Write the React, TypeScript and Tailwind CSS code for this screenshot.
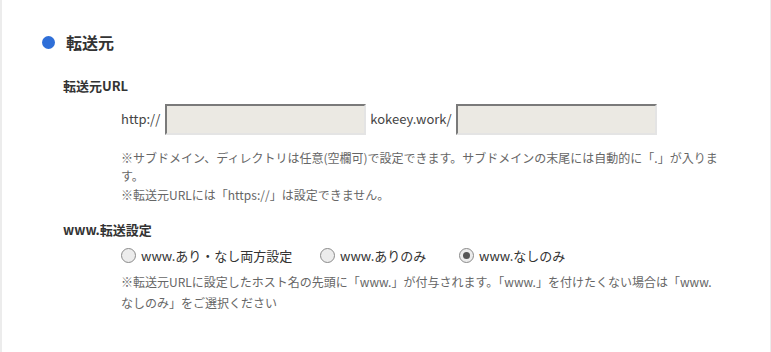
const font = { fontFamily: '"Noto Sans CJK JP", "Noto Sans", sans-serif' }

function TextBox() {
  return (
    <input
      type="text"
      className="w-[201px] h-[31px] bg-[#ebe9e3] border-2 border-t-[#7a7a7a] border-l-[#7a7a7a] border-b-[#e4e4e4] border-r-[#e4e4e4] outline-none"
    />
  )
}

function Radio({ label, checked }: { label: string; checked?: boolean }) {
  return (
    <label className="flex items-center gap-[5px] text-[13px] text-[#333]">
      <span className="w-[15px] h-[15px] rounded-full border border-[#8a8a8a] bg-[#ececec] flex items-center justify-center">
        {checked && <span className="w-[7px] h-[7px] rounded-full bg-[#555]" />}
      </span>
      {label}
    </label>
  )
}

export default function App() {
  return (
    <div className="w-[771px] h-[352px] bg-white border-l-2 border-r border-[#ececec] overflow-hidden" style={font}>
      <div className="pl-[40px] pt-[30px]">
        <div className="flex items-center gap-[11px]">
          <span className="w-[13px] h-[13px] rounded-full bg-[#2f6fd8]" />
          <h2 className="text-[16px] font-bold text-[#333]">転送元</h2>
        </div>

        <div className="pl-[21px] mt-[22px]">
          <h3 className="text-[13px] font-bold text-[#333]">転送元URL</h3>
          <div className="pl-[58px] mt-[8px]">
            <div className="flex items-center text-[13px] text-[#444]">
              <span className="mr-[5px]">http://</span>
              <TextBox />
              <span className="mx-[4px]">kokeey.work/</span>
              <TextBox />
            </div>
            <div className="mt-[14px] text-[12px] leading-[18.5px] text-[#666]">
              <p>※サブドメイン、ディレクトリは任意(空欄可)で設定できます。サブドメインの末尾には自動的に「.」が入りま<br />す。</p>
              <p>※転送元URLには「https://」は設定できません。</p>
            </div>
          </div>

          <h3 className="mt-[16px] text-[13px] font-bold text-[#333]">www.転送設定</h3>
          <div className="pl-[58px] mt-[6px]">
            <div className="flex items-center">
              <div className="w-[199px]"><Radio label="www.あり・なし両方設定" /></div>
              <div className="w-[139px]"><Radio label="www.ありのみ" /></div>
              <Radio label="www.なしのみ" checked />
            </div>
            <p className="mt-[6px] text-[12px] leading-[21px] text-[#666]">
              ※転送元URLに設定したホスト名の先頭に「www.」が付与されます。「www.」を付けたくない場合は「www.<br />なしのみ」をご選択ください
            </p>
          </div>
        </div>
      </div>
    </div>
  )
}
